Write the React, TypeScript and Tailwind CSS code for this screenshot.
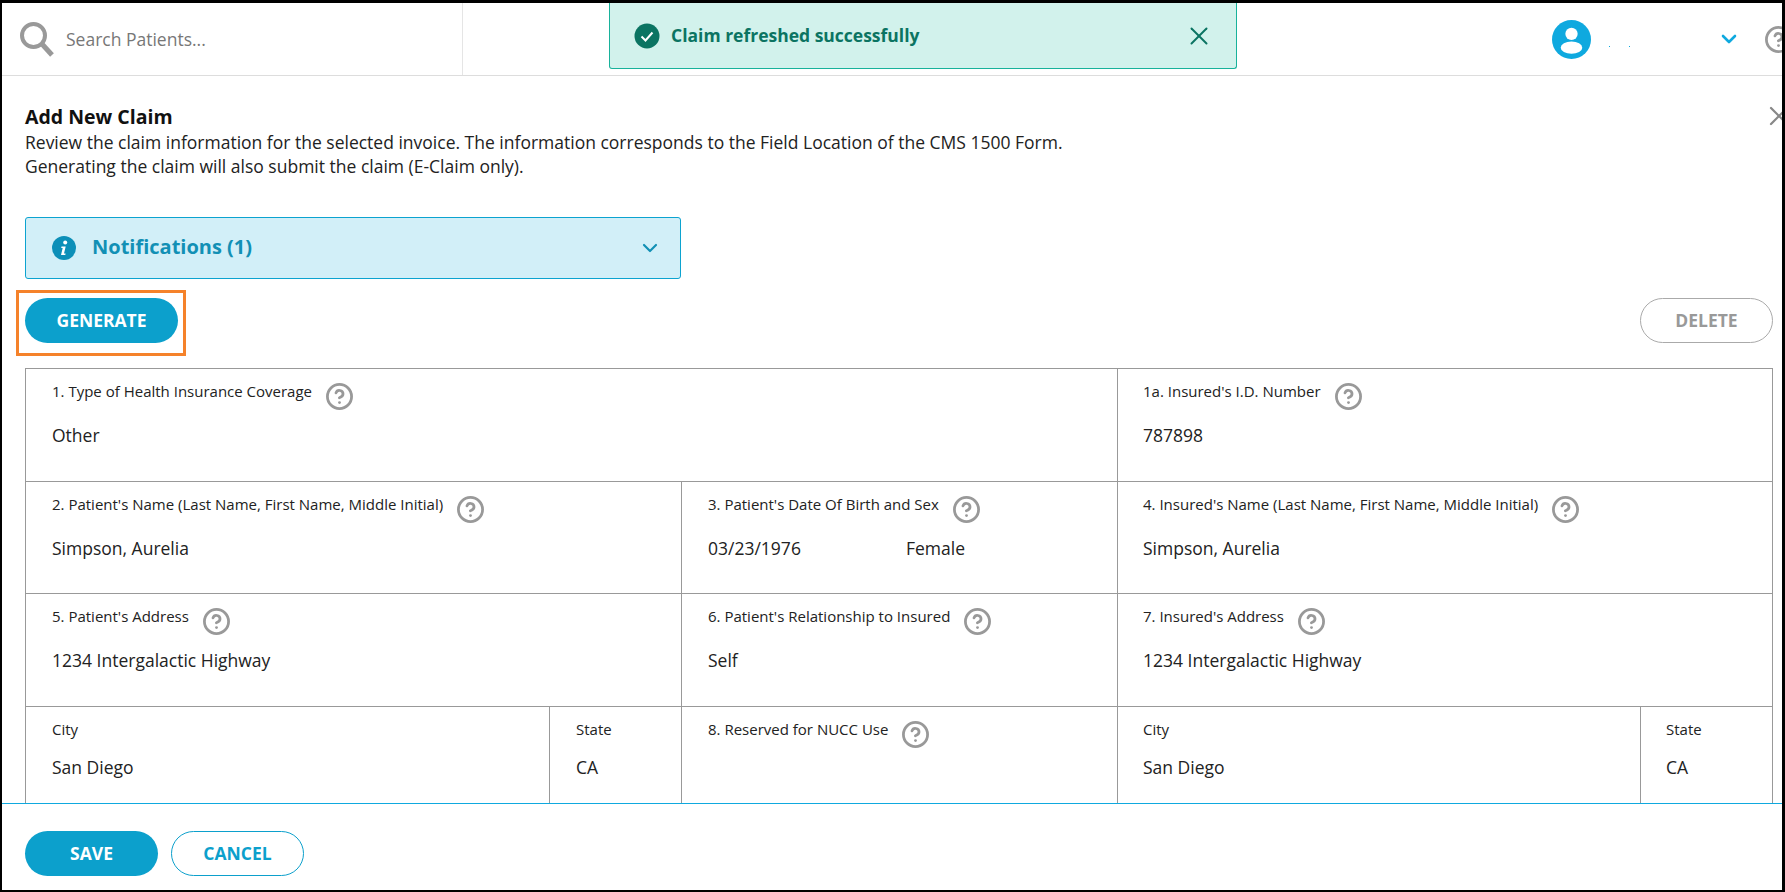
import { ChevronDown, CircleHelp, X } from "lucide-react";

const FONT = "font-['Open_Sans',sans-serif]";

function Help({ className = "" }: { className?: string }) {
  return <CircleHelp size={29} strokeWidth={2.3} className={`shrink-0 text-[#999999] ${className}`} />;
}

function Cell({
  label,
  value,
  help = true,
  className = "",
}: {
  label: string;
  value?: React.ReactNode;
  help?: boolean;
  className?: string;
}) {
  return (
    <div className={`border-r border-[#999999] pt-[12px] ${className}`}>
      <div className={`flex items-start ${help ? "h-[28px]" : "h-[22px]"}`}>
        <span className="text-[15px] leading-[20px] text-[#222222]">{label}</span>
        {help && <Help className="ml-[13px] mt-[1px]" />}
      </div>
      <div className="mt-[14px] text-[17.5px] leading-[24px] text-[#222222]">{value}</div>
    </div>
  );
}

function Pill({ children, className = "" }: { children: React.ReactNode; className?: string }) {
  return (
    <button
      type="button"
      className={`flex h-[45px] items-center justify-center rounded-full text-[17.5px] font-bold ${className}`}
    >
      {children}
    </button>
  );
}

export default function App() {
  return (
    <div
      className={`relative flex h-[892px] w-[1785px] flex-col overflow-hidden border-t-[3px] border-r-[3px] border-b-[2px] border-l-[2px] border-black bg-white ${FONT}`}
    >
      {/* top bar */}
      <header className="flex h-[73px] shrink-0 items-center border-b border-[#dddddd]">
        <div className="flex h-full w-[461px] items-center border-r border-[#e5e5e5] pl-[17px]">
          <svg width="36" height="36" viewBox="0 0 36 36" fill="none" stroke="#999999">
            <circle cx="14.5" cy="14.5" r="11.5" strokeWidth="4" />
            <path d="M23 23l10 11" strokeWidth="5" />
          </svg>
          <span className="ml-[11px] text-[17.5px] text-[#777777]">Search Patients...</span>
        </div>
        <div className="ml-auto flex items-center">
          <svg width="39" height="39" viewBox="0 0 38 38" className="mr-[18px]">
            <circle cx="19" cy="19" r="19" fill="#0fa9df" />
            <circle cx="19" cy="13.5" r="6" fill="#fff" />
            <ellipse cx="19" cy="27" rx="10.5" ry="6" fill="#fff" />
          </svg>
          <span className="mr-[87px] flex w-[21px] justify-between pt-[14px]">
            <span className="h-px w-px bg-[#0fa9df]" />
            <span className="h-px w-px bg-[#0fa9df]" />
          </span>
          <ChevronDown size={24} strokeWidth={2.6} className="text-[#0fa9df]" />
          <Help className="-mr-[11px] ml-[23px]" />
        </div>
      </header>

      {/* toast */}
      <div className="absolute left-[607px] top-0 flex h-[66px] w-[628px] items-center rounded-b-[3px] border border-t-0 border-[#18b29b] bg-[#d2f2ec] pl-[24px]">
        <svg width="26" height="26" viewBox="0 0 26 26">
          <circle cx="13" cy="13" r="12.5" fill="#0b7462" />
          <path d="M7.5 13.5l4 4 7-8" fill="none" stroke="#fff" strokeWidth="2" />
        </svg>
        <span className="ml-[11px] text-[17.5px] font-bold text-[#0b7462]">Claim refreshed successfully</span>
        <X size={30} strokeWidth={1.6} className="ml-auto mr-[22px] text-[#0b7462]" />
      </div>

      {/* content */}
      <main className="relative min-h-0 flex-1 overflow-hidden pl-[23px] pr-[9px]">
        <X size={32} strokeWidth={1.7} className="absolute right-[-13px] top-[24px] text-[#888888]" />
        <h1 className="mt-[27px] text-[19.5px] font-bold leading-[27px] text-[#111111]">Add New Claim</h1>
        <p className="text-[17.5px] leading-[24px] text-[#222222]">
          Review the claim information for the selected invoice. The information corresponds to the Field Location of
          the CMS 1500 Form.
          <br />
          Generating the claim will also submit the claim (E-Claim only).
        </p>

        <div className="mt-[39px] flex h-[62px] w-[656px] items-center rounded-[3px] border border-[#0ca3d0] bg-[#d2eff8] pl-[26px] pr-[18px]">
          <svg width="24" height="24" viewBox="0 0 24 24">
            <circle cx="12" cy="12" r="12" fill="#0c8fb8" />
            <circle cx="13.2" cy="6.6" r="2" fill="#fff" />
            <path d="M9.5 10.5h4.2l-1.7 7h1.6l-.3 1.4H9l1.7-7H9.2z" fill="#fff" />
          </svg>
          <span className="ml-[16px] pb-[2px] text-[20px] font-bold text-[#1290b5]">Notifications (1)</span>
          <ChevronDown size={24} strokeWidth={2.2} className="ml-auto text-[#1290b5]" />
        </div>

        <div className="mt-[19px] flex items-center justify-between">
          <Pill className="w-[153px] bg-[#0ca0cc] text-white">GENERATE</Pill>
          <Pill className="w-[133px] border border-[#aaaaaa] text-[#999999]">DELETE</Pill>
        </div>
        {/* orange callout around the generate button */}
        <div className="absolute left-[14px] top-[214px] h-[66px] w-[170px] border-[3px] border-[#f5822a]" />

        <div className="mt-[25px] w-[1748px] border-t border-l border-[#999999]">
          <div className="flex h-[113px] border-b border-[#999999]">
            <Cell className="w-[1092px] pl-[26px]" label="1. Type of Health Insurance Coverage" value="Other" />
            <Cell className="flex-1 pl-[25px]" label="1a. Insured's I.D. Number" value="787898" />
          </div>
          <div className="flex h-[112px] border-b border-[#999999]">
            <Cell
              className="w-[656px] pl-[26px]"
              label="2. Patient's Name (Last Name, First Name, Middle Initial)"
              value="Simpson, Aurelia"
            />
            <Cell
              className="w-[436px] pl-[26px]"
              label="3. Patient's Date Of Birth and Sex"
              value={
                <div className="mt-[2px] flex">
                  <span className="w-[198px]">03/23/1976</span>
                  <span>Female</span>
                </div>
              }
            />
            <Cell
              className="flex-1 pl-[25px]"
              label="4. Insured's Name (Last Name, First Name, Middle Initial)"
              value="Simpson, Aurelia"
            />
          </div>
          <div className="flex h-[113px] border-b border-[#999999]">
            <Cell className="w-[656px] pl-[26px]" label="5. Patient's Address" value="1234 Intergalactic Highway" />
            <Cell className="w-[436px] pl-[26px]" label="6. Patient's Relationship to Insured" value="Self" />
            <Cell className="flex-1 pl-[25px]" label="7. Insured's Address" value="1234 Intergalactic Highway" />
          </div>
          <div className="flex h-[113px]">
            <Cell className="w-[524px] pl-[26px]" label="City" value="San Diego" help={false} />
            <Cell className="w-[132px] pl-[26px]" label="State" value="CA" help={false} />
            <Cell className="w-[436px] pl-[26px]" label="8. Reserved for NUCC Use" />
            <Cell className="w-[523px] pl-[25px]" label="City" value="San Diego" help={false} />
            <Cell className="flex-1 pl-[25px]" label="State" value="CA" help={false} />
          </div>
        </div>
      </main>

      {/* footer */}
      <footer className="flex h-[87px] shrink-0 gap-[13px] border-t border-[#0fa9df] pl-[23px] pt-[27px]">
        <Pill className="w-[133px] bg-[#0ca0cc] text-white">SAVE</Pill>
        <Pill className="w-[133px] border border-[#0ca0cc] text-[#0ca0cc]">CANCEL</Pill>
      </footer>
    </div>
  );
}
